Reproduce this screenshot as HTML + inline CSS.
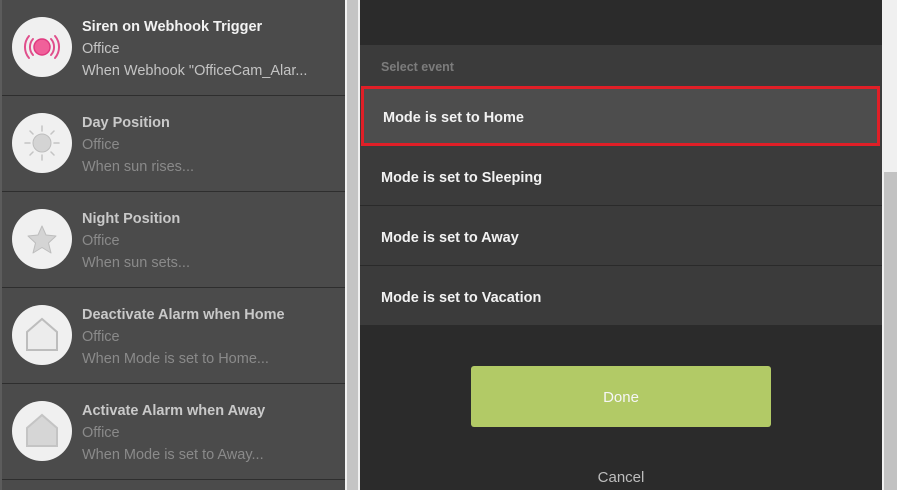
<!DOCTYPE html>
<html><head><meta charset="utf-8"><style>
*{margin:0;padding:0;box-sizing:border-box}
body{width:897px;height:490px;overflow:hidden;background:#f0f0f0;font-family:"Liberation Sans",sans-serif;position:relative}
.left{position:absolute;left:0;top:0;width:345px;height:490px;background:#4b4b4b;border-left:2px solid #5c5c5c}
.sb1{position:absolute;left:347px;top:0;width:11px;height:490px;background:#c4c4c4}
.row{position:absolute;left:0;width:343px;height:96px;border-bottom:1px solid #2e2e2e}
.circ{position:absolute;left:10px;top:17px;width:60px;height:60px;border-radius:50%;background:#f0f0f0}
.circ svg{position:absolute;left:0;top:0}
.t{position:absolute;left:80px;font-size:14.5px;font-weight:bold;color:#c9c9c9}
.s{position:absolute;left:80px;font-size:14.5px;color:#8a8a8a;white-space:nowrap}
.modal{position:absolute;left:360px;top:0;width:522px;height:490px;background:#2b2b2b}
.list{position:absolute;left:0;top:45px;width:522px;height:280px;background:#3b3b3b}
.hdr{position:absolute;left:21px;top:15px;font-size:12.5px;font-weight:bold;color:#7c7c7c}
.it{position:absolute;left:0;width:522px;height:60px;border-bottom:1px solid #2a2a2a;font-size:14.5px;font-weight:bold;color:#f2f2f2;padding-left:21px;padding-top:2px;line-height:60px}
.sel{background:#4d4d4d;border:3px solid #e01f27;padding-left:19px;line-height:54px;width:519px;left:1px}
.done{position:absolute;left:111px;top:366px;width:300px;height:61px;border-radius:3px;background:#b2ca66;color:#f6f6f6;font-size:15px;text-align:center;line-height:63px}
.cancel{position:absolute;left:0;width:522px;top:469px;text-align:center;color:#bdbdbd;font-size:15px}
.sb2{position:absolute;left:884px;top:172px;width:13px;height:318px;background:#c2c2c2}
</style></head><body>
<div class="left">
 <div class="row" style="top:0">
  <div class="circ"><svg width="60" height="60"><circle cx="30" cy="30" r="8" fill="#f0609a" stroke="#e03a80" stroke-width="1.5"/><path d="M21 22a12 12 0 0 0 0 16M17 19a17 17 0 0 0 0 22M39 22a12 12 0 0 1 0 16M43 19a17 17 0 0 1 0 22" fill="none" stroke="#e04f8c" stroke-width="2" stroke-linecap="round"/></svg></div>
  <div class="t" style="top:19px;color:#f2f2f2">Siren on Webhook Trigger</div>
  <div class="s" style="top:41px;color:#c4c4c4">Office</div>
  <div class="s" style="top:63px;color:#c4c4c4">When Webhook "OfficeCam_Alar...</div>
 </div>
 <div class="row" style="top:96px">
  <div class="circ"><svg width="60" height="60"><circle cx="30" cy="30" r="9" fill="#d4d4d4" stroke="#bdbdbd"/><g stroke="#c4c4c4" stroke-width="1.5" stroke-linecap="round"><path d="M30 13v5M30 42v5M13 30h5M42 30h5M18 18l3 3M39 39l3 3M42 18l-3 3M21 39l-3 3"/></g></svg></div>
  <div class="t" style="top:19px">Day Position</div>
  <div class="s" style="top:41px">Office</div>
  <div class="s" style="top:63px">When sun rises...</div>
 </div>
 <div class="row" style="top:192px">
  <div class="circ"><svg width="60" height="60"><path d="M30 17l4 9 10 1-7.5 7 2.5 10-9-5.5-9 5.5 2.5-10-7.5-7 10-1z" fill="#d4d4d4" stroke="#bdbdbd" stroke-linejoin="round"/></svg></div>
  <div class="t" style="top:19px">Night Position</div>
  <div class="s" style="top:41px">Office</div>
  <div class="s" style="top:63px">When sun sets...</div>
 </div>
 <div class="row" style="top:288px">
  <div class="circ"><svg width="60" height="60"><path d="M15 45V27l15-13 15 13v18z" fill="#ececec" stroke="#bdbdbd" stroke-width="2"/></svg></div>
  <div class="t" style="top:19px">Deactivate Alarm when Home</div>
  <div class="s" style="top:41px">Office</div>
  <div class="s" style="top:63px">When Mode is set to Home...</div>
 </div>
 <div class="row" style="top:384px">
  <div class="circ"><svg width="60" height="60"><path d="M15 45V27l15-13 15 13v18z" fill="#d6d6d6" stroke="#c4c4c4" stroke-width="2"/></svg></div>
  <div class="t" style="top:19px">Activate Alarm when Away</div>
  <div class="s" style="top:41px">Office</div>
  <div class="s" style="top:63px">When Mode is set to Away...</div>
 </div>
</div>
<div class="sb1"></div>
<div class="modal">
 <div class="list">
  <div class="hdr">Select event</div>
  <div class="it sel" style="top:41px">Mode is set to Home</div>
  <div class="it" style="top:101px">Mode is set to Sleeping</div>
  <div class="it" style="top:161px">Mode is set to Away</div>
  <div class="it" style="top:221px;border-bottom:none">Mode is set to Vacation</div>
 </div>
 <div class="done">Done</div>
 <div class="cancel">Cancel</div>
</div>
<div class="sb2"></div>
</body></html>
